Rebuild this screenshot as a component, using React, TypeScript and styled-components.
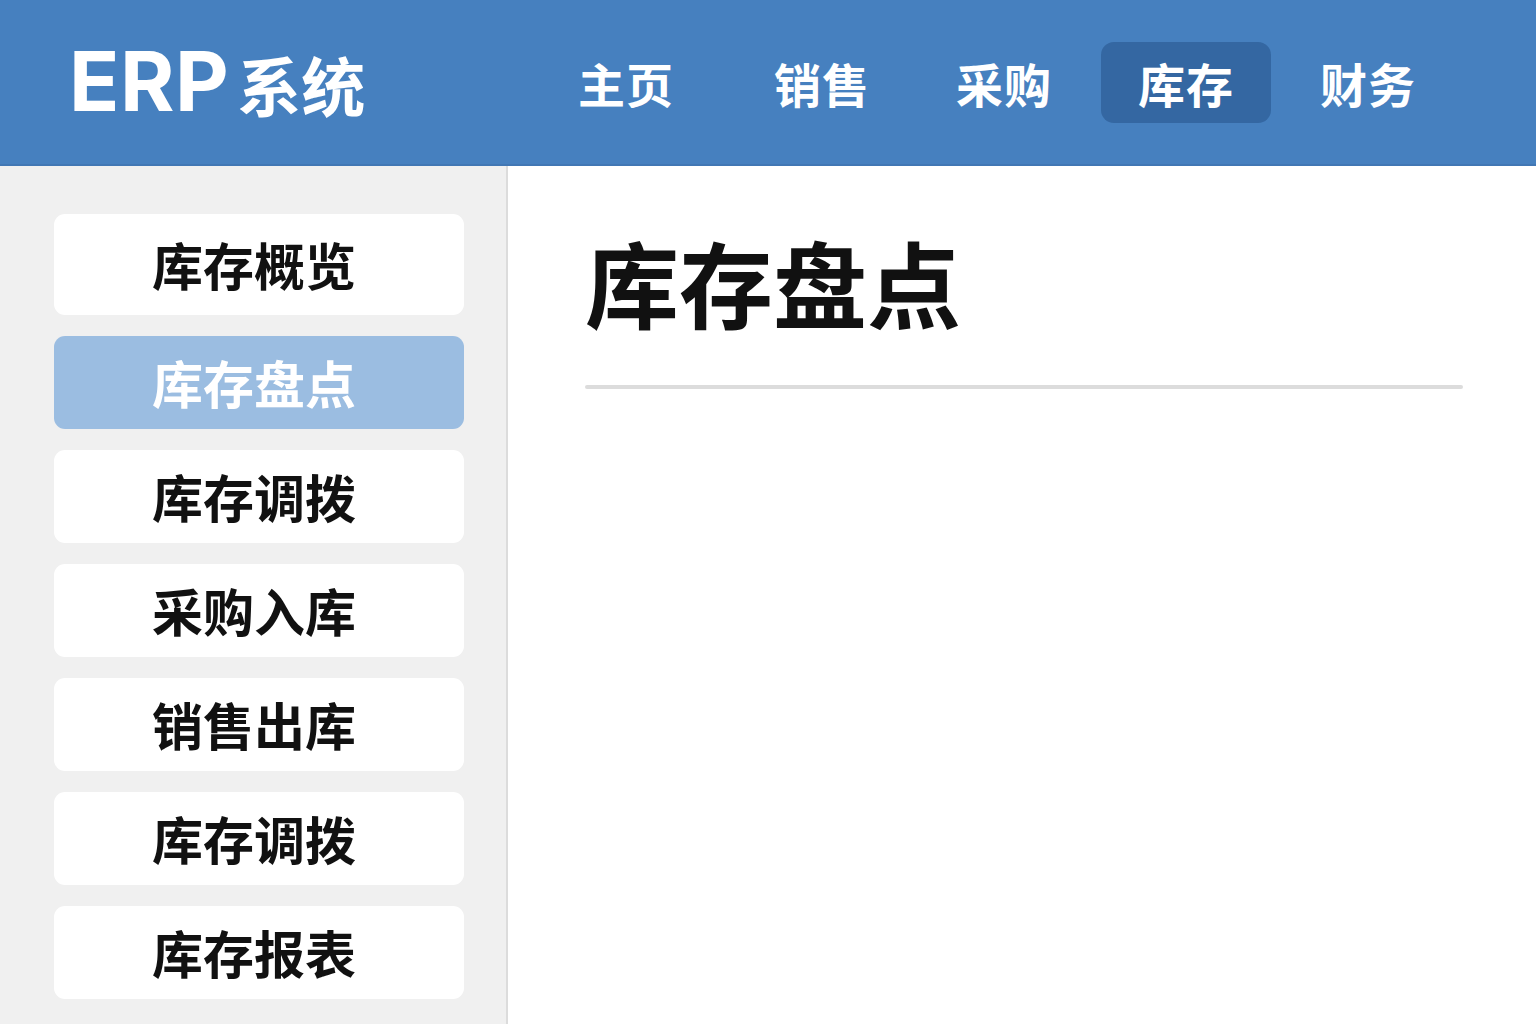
import React from "react";
import styled, { createGlobalStyle } from "styled-components";

const GlobalStyle = createGlobalStyle`
  html, body {
    margin: 0;
    padding: 0;
    background: #ffffff;
    font-family: "Noto Sans CJK SC", "Noto Sans", sans-serif;
  }
  * { box-sizing: border-box; }
`;

const Page = styled.div`
  width: 1536px;
  min-height: 1024px;
  display: flex;
  flex-direction: column;
`;

const Header = styled.header`
  height: 166px;
  flex: none;
  display: flex;
  align-items: center;
  padding: 0 83px 0 69px;
  background: #4680bf;
  border-bottom: 2px solid #4177b4;
`;

const Logo = styled.div`
  display: flex;
  align-items: baseline;
  gap: 8px;
  color: #ffffff;
  font-weight: 700;
  line-height: 1;
  margin-top: -2px;
`;

const LogoLatin = styled.span`
  font-family: "Inter", "Roboto", sans-serif;
  font-size: 83px;
  letter-spacing: 0.5px;
`;

const LogoCjk = styled.span`
  font-family: "Noto Sans CJK SC", sans-serif;
  font-size: 64px;
`;

const Nav = styled.nav`
  margin-left: auto;
  display: flex;
  align-items: center;
  gap: 12px;
`;

const NavItem = styled.div<{ $active?: boolean; $first?: boolean }>`
  width: 170px;
  height: 81px;
  display: flex;
  align-items: center;
  justify-content: center;
  border-radius: 13px;
  margin-right: ${(p) => (p.$first ? "14px" : "0")};
  background: ${(p) => (p.$active ? "#3467a2" : "transparent")};
  color: #ffffff;
  font-size: 47px;
  font-weight: 700;
  line-height: 1;
  letter-spacing: 1px;
`;

const Body = styled.div`
  flex: 1;
  display: flex;
  min-height: 858px;
`;

const Sidebar = styled.aside`
  width: 508px;
  flex: none;
  background: #f0f0f0;
  border-right: 2px solid #dcdcdc;
  padding: 48px 42px 20px 54px;
  display: flex;
  flex-direction: column;
  gap: 21px;
`;

const SideItem = styled.div<{ $active?: boolean; $tall?: boolean }>`
  height: ${(p) => (p.$tall ? "101px" : "93px")};
  display: flex;
  align-items: center;
  justify-content: center;
  padding-right: 10px;
  border-radius: 11px;
  background: ${(p) => (p.$active ? "#9bbde1" : "#ffffff")};
  color: ${(p) => (p.$active ? "#ffffff" : "#111111")};
  font-size: 51px;
  font-weight: 700;
  line-height: 1;
`;

const Main = styled.main`
  flex: 1;
  background: #ffffff;
  padding: 68px 73px 0 77px;
`;

const Title = styled.h1`
  margin: 0;
  font-size: 94px;
  font-weight: 700;
  line-height: 1;
  color: #111111;
`;

const Divider = styled.div`
  margin-top: 57px;
  height: 4px;
  border-radius: 2px;
  background: #dcdcdc;
`;

const navItems = ["主页", "销售", "采购", "库存", "财务"];
const sideItems = ["库存概览", "库存盘点", "库存调拨", "采购入库", "销售出库", "库存调拨", "库存报表"];

export default function App() {
  return (
    <>
      <GlobalStyle />
      <Page>
        <Header>
          <Logo>
            <LogoLatin>ERP</LogoLatin>
            <LogoCjk>系统</LogoCjk>
          </Logo>
          <Nav>
            {navItems.map((n, i) => (
              <NavItem key={n} $first={i === 0} $active={n === "库存"}>
                {n}
              </NavItem>
            ))}
          </Nav>
        </Header>
        <Body>
          <Sidebar>
            {sideItems.map((s, i) => (
              <SideItem key={i} $tall={i === 0} $active={i === 1}>
                {s}
              </SideItem>
            ))}
          </Sidebar>
          <Main>
            <Title>库存盘点</Title>
            <Divider />
          </Main>
        </Body>
      </Page>
    </>
  );
}
